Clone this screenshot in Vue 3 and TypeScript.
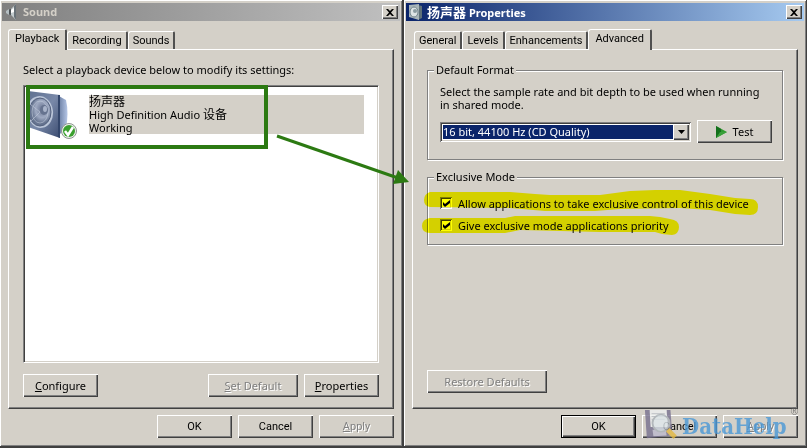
<script setup lang="ts">
import { ref } from 'vue'

const playbackTabs = ['Playback', 'Recording', 'Sounds']
const propertyTabs = ['General', 'Levels', 'Enhancements', 'Advanced']
const activePlayback = ref('Playback')
const activeProperty = ref('Advanced')
const format = ref('16 bit, 44100 Hz (CD Quality)')
const allowExclusive = ref(true)
const givePriority = ref(true)
</script>

<template>
  <main class="desktop">
    <section class="window sound">
      <header class="titlebar inactive">
        <svg class="app-icon" width="16" height="16" viewBox="0 0 16 16" aria-hidden="true">
          <path d="M4 6l3-1v6l-3-1z" fill="#4a5054" />
          <path d="M7 5l5-5v16l-5-5z" fill="#c3cbce" />
          <path d="M10 2l2-2v16l-2-3z" fill="#697278" />
          <path d="M2 7l3-2v6l-3-2z" fill="#b5bec2" />
          <path d="M7 6l3-2v4L7 9z" fill="#fff" />
        </svg>
        <h1>Sound</h1>
        <button class="close" type="button" aria-label="Close">
          <svg width="8" height="7" viewBox="0 0 8 7"><path d="M0 0h2l2 2 2-2h2L5 3.500 8 7H6L4 5 2 7H0l3-3.500z" fill="#000" /></svg>
        </button>
      </header>
      <div class="body">
        <nav class="tabs" role="tablist">
          <button v-for="t in playbackTabs" :key="t" type="button" role="tab" class="tab" :class="{ active: t === activePlayback }" :aria-selected="t === activePlayback" @click="activePlayback = t">{{ t }}</button>
        </nav>
        <div class="panel playback">
          <p class="hint">Select a playback device below to modify its settings:</p>
          <div class="list">
            <div class="device">
              <svg class="speaker" width="52" height="52" viewBox="0 0 52 52" aria-hidden="true">
                <defs>
                  <linearGradient id="side" x1="0" x2="1"><stop offset="0" stop-color="#5d7196" /><stop offset="1" stop-color="#b5c6e6" /></linearGradient>
                  <linearGradient id="front" x1="0" y1="0" x2="1" y2="1"><stop offset="0" stop-color="#5f7190" /><stop offset=".5" stop-color="#7888a8" /><stop offset="1" stop-color="#3b4c70" /></linearGradient>
                  <radialGradient id="cone" cx=".6" cy=".4"><stop offset="0" stop-color="#66728f" /><stop offset=".6" stop-color="#9faac2" /><stop offset="1" stop-color="#65738f" /></radialGradient>
                </defs>
                <path d="M29 5l9 5q3 13 0 28l-9 9z" fill="url(#side)" />
                <path d="M0 1l32 4v43L0 37z" fill="url(#front)" />
                <path d="M30 5l2 0v43l-2-1z" fill="#33466b" />
                <ellipse cx="12" cy="22" rx="13" ry="16" fill="#bac5d8" transform="rotate(-8 12 22)" />
                <ellipse cx="12" cy="22" rx="11" ry="14" fill="url(#cone)" stroke="#53617e" />
                <ellipse cx="12" cy="22" rx="8" ry="11" fill="none" stroke="#c0c9db" opacity=".6" />
                <path d="M12 22L2 14M12 22L3 31" stroke="#c2cbdc" opacity=".6" />
                <ellipse cx="16" cy="20" rx="4" ry="5" fill="#66738f" />
                <ellipse cx="17" cy="19" rx="2" ry="3" fill="#a9b4ca" />
                <circle cx="41" cy="41" r="7.500" fill="#eef2ee" stroke="#8e9690" />
                <circle cx="41" cy="41" r="6" fill="#3aa02e" />
                <path d="M37 41l3 4 5-8" fill="none" stroke="#fff" stroke-width="2.500" />
              </svg>
              <div class="device-text">
                <span class="cjk">扬声器</span>
                <span>High Definition Audio <span class="cjk">设备</span></span>
                <span>Working</span>
              </div>
            </div>
          </div>
          <div class="row actions">
            <button type="button" class="btn"><span><u>C</u>onfigure</span></button>
            <span class="grow"></span>
            <button type="button" class="btn wide" disabled><span><u>S</u>et Default</span></button>
            <button type="button" class="btn"><span><u>P</u>roperties</span></button>
          </div>
        </div>
        <footer class="row footer">
          <button type="button" class="btn">OK</button>
          <button type="button" class="btn">Cancel</button>
          <button type="button" class="btn" disabled><span><u>A</u>pply</span></button>
        </footer>
      </div>
    </section>

    <section class="window properties">
      <header class="titlebar">
        <svg class="app-icon" width="16" height="16" viewBox="0 0 16 16" aria-hidden="true">
          <path d="M10 1l4 1v12l-4 2z" fill="#5e7078" />
          <path d="M1 1l10-1v16L1 13z" fill="#a8b5b9" />
          <ellipse cx="6" cy="8" rx="4" ry="5" fill="#dde4e5" stroke="#71838a" />
          <ellipse cx="7" cy="7" rx="2" ry="2" fill="#8a9ba1" />
        </svg>
        <h1><span class="cjk">扬声器</span> Properties</h1>
        <button class="close" type="button" aria-label="Close">
          <svg width="8" height="7" viewBox="0 0 8 7"><path d="M0 0h2l2 2 2-2h2L5 3.500 8 7H6L4 5 2 7H0l3-3.500z" fill="#000" /></svg>
        </button>
      </header>
      <div class="body">
        <nav class="tabs" role="tablist">
          <button v-for="t in propertyTabs" :key="t" type="button" role="tab" class="tab" :class="{ active: t === activeProperty }" :aria-selected="t === activeProperty" @click="activeProperty = t">{{ t }}</button>
        </nav>
        <div class="panel advanced">
          <fieldset class="group">
            <legend>Default Format</legend>
            <label class="desc" for="format">Select the sample rate and bit depth to be used when running in shared mode.</label>
            <div class="row format-row">
              <div class="combo">
                <select id="format" v-model="format">
                  <option>16 bit, 44100 Hz (CD Quality)</option>
                </select>
                <span class="drop" aria-hidden="true">
                  <svg width="7" height="4" viewBox="0 0 7 4"><path d="M0 0h7L3.500 4z" fill="#000" /></svg>
                </span>
              </div>
              <button type="button" class="btn">
                <svg width="11" height="12" viewBox="0 0 11 12" aria-hidden="true"><path d="M0 0l11 6L0 12z" fill="#2f9a2f" /><path d="M0 0l5 3v4L0 12z" fill="#14701c" /><path d="M0 12l4-6 7 0z" fill="#3aa03a" /></svg>
                Test
              </button>
            </div>
          </fieldset>
          <fieldset class="group exclusive">
            <legend>Exclusive Mode</legend>
            <label class="check">
              <span class="box"><input v-model="allowExclusive" type="checkbox" /><svg v-if="allowExclusive" width="7" height="7" viewBox="0 0 7 7"><path d="M0 2l2 2 5-4v3L2 7 0 5z" fill="#000" /></svg></span>
              Allow applications to take exclusive control of this device
            </label>
            <label class="check">
              <span class="box"><input v-model="givePriority" type="checkbox" /><svg v-if="givePriority" width="7" height="7" viewBox="0 0 7 7"><path d="M0 2l2 2 5-4v3L2 7 0 5z" fill="#000" /></svg></span>
              Give exclusive mode applications priority
            </label>
            <svg class="marker" width="340" height="48" viewBox="0 0 340 48" aria-hidden="true">
              <path d="M8 4L88 4 113 6 128 7H178L208 3 233 2H258L288 6 313 10 328 11Q336 11 336 19T328 27L313 26 288 22 258 20 198 21 173 23H123L88 20 8 19Q2 18 2 12T8 4z" fill="#ff0" />
              <path d="M8 30H83L93 28H228L238 29 248 31Q257 32 257 39T250 47L240 46 233 44H178L98 42 83 45H8Q0 45 0 38T8 30z" fill="#ff0" />
            </svg>
          </fieldset>
          <span class="grow"></span>
          <div class="row">
            <button type="button" class="btn restore" disabled>Restore Defaults</button>
          </div>
        </div>
        <footer class="row footer">
          <button type="button" class="btn default">OK</button>
          <button type="button" class="btn">Cancel</button>
          <button type="button" class="btn" disabled><span><u>A</u>pply</span></button>
        </footer>
      </div>
      <div class="watermark">
        <svg width="34" height="34" viewBox="0 0 36 34" aria-hidden="true">
          <path d="M1 1l27 0 2 27L3 31z" fill="#77708f" />
          <path d="M6 1h18l1 18H7z" fill="#eef0f0" />
          <path d="M8 5h14M8 8h14M8 11h14" stroke="#b6bcc4" />
          <path d="M9 22h14l1 6-14 1z" fill="#bcb9cc" />
          <circle cx="18" cy="15" r="9" fill="#dce8ee" fill-opacity=".75" stroke="#aab2b8" stroke-width="2" />
          <path d="M25 22l8 8" stroke="#e3b940" stroke-width="5" />
        </svg>
        <span class="brand">DataHelp</span>
        <span class="reg">®</span>
      </div>
    </section>

    <svg class="callout" width="412" height="192" viewBox="0 0 412 192" aria-hidden="true">
      <rect x="28" y="87" width="238" height="60" fill="none" stroke="#2c7a12" stroke-width="4" />
      <path d="M277 136L398 178" stroke="#2c7a12" stroke-width="3" />
      <path d="M409 182l-16 2 5-14z" fill="#2c7a12" />
    </svg>
  </main>
</template>

<style>
body {
  background: #d4d0c8;
}
</style>

<style scoped>
* {
  box-sizing: border-box;
}
.desktop {
  --ui: "Noto Sans", "Noto Sans CJK SC", sans-serif;
  --tab: Roboto, "Noto Sans", sans-serif;
  position: relative;
  display: grid;
  grid-template-columns: 404fr 403fr;
  min-height: 100vh;
  overflow: hidden;
  font: 11px/13px var(--ui);
  color: #000;
}
.window {
  position: relative;
  display: flex;
  flex-direction: column;
  background: #d4d0c8;
  border-right: 1px solid #404040;
  border-bottom: 2px solid #404040;
  padding: 2px 1px 0;
  box-shadow: inset 1px 1px #fff, inset -1px -1px #808080;
}
.sound {
  border-right-width: 2px;
}
.titlebar {
  display: flex;
  align-items: center;
  gap: 3px;
  height: 18px;
  margin: 1px 1px 0;
  padding: 0 2px;
  background: linear-gradient(90deg, #0a246a, #a6caf0);
  color: #fff;
}
.titlebar.inactive {
  background: linear-gradient(90deg, #808080, #c0c0c0);
  color: #d4d0c8;
}
.titlebar h1 {
  flex: 1;
  margin: 0;
  font: bold 11px/18px var(--ui);
}
.cjk {
  font-size: 12px;
}
.titlebar .cjk {
  font-size: 13px;
}
.close {
  display: grid;
  place-items: center;
  width: 16px;
  height: 14px;
  padding: 0;
  border: 0;
  background: #d4d0c8;
  box-shadow: inset 1px 1px #fff, inset -1px -1px #404040, inset -2px -2px #808080;
}
.body {
  flex: 1;
  display: flex;
  flex-direction: column;
  padding: 8px 7px 8px;
}
.tabs {
  display: flex;
  align-items: flex-end;
  height: 20px;
}
.properties .tabs {
  padding-left: 2px;
}
.tab {
  position: relative;
  height: 18px;
  padding: 0 4px;
  border: 1px solid #fff;
  border-right: 2px solid #505050;
  border-bottom: 0;
  border-radius: 3px 2px 0 0;
  background: #d4d0c8;
  color: #000;
  font: 11px/17px var(--tab);
}
.tab.active {
  z-index: 1;
  height: 21px;
  margin-bottom: -1px;
  padding: 0 6px 3px;
}
.panel {
  flex: 1;
  display: flex;
  flex-direction: column;
  border: 1px solid #fff;
  border-right-color: #404040;
  border-bottom-color: #404040;
  box-shadow: inset -1px -1px #808080;
  padding: 12px 14px;
}
.hint {
  margin: 0 0 7px;
  line-height: 16px;
}
.list {
  flex: 1;
  padding: 8px 14px 0 4px;
  background: #fff;
  border: 1px solid #808080;
  border-right-color: #fff;
  border-bottom-color: #fff;
  box-shadow: inset 1px 1px #404040, inset -1px -1px #d4d0c8;
}
.device {
  display: flex;
  align-items: flex-start;
  gap: 9px;
}
.speaker {
  flex: none;
  margin-top: -4px;
}
.device-text {
  flex: 1;
  display: grid;
  grid-auto-rows: 13px;
  margin-top: 1px;
  background: #d4d0c8;
}
.row {
  display: flex;
  gap: 6px;
}
.grow {
  flex: 1;
}
.actions {
  margin-top: 11px;
}
.playback {
  padding-bottom: 11px;
}
.advanced {
  padding-bottom: 15px;
}
.footer {
  justify-content: flex-end;
  margin-top: 6px;
}
.btn {
  display: flex;
  align-items: center;
  justify-content: center;
  gap: 6px;
  width: 75px;
  height: 23px;
  padding: 0;
  border: 0;
  background: #d4d0c8;
  box-shadow: inset 1px 1px #fff, inset -1px -1px #404040, inset -2px -2px #808080;
  color: #000;
  font: 11px/16px var(--ui);
}
.btn.wide {
  width: 90px;
}
.btn.restore {
  width: 120px;
}
.footer .btn {
  font-family: var(--tab);
}
.btn:disabled {
  color: #808080;
  text-shadow: 1px 1px #fff;
}
.btn.default {
  border: 1px solid #000;
}
.group {
  position: relative;
  min-width: 0;
  margin: 0;
  padding: 1px 10px 16px 12px;
  border: 1px solid #808080;
  box-shadow: 1px 1px #fff, inset 1px 1px #fff;
}
.group legend {
  margin-left: -6px;
  padding: 0 2px;
  background: #d4d0c8;
  line-height: 16px;
}
.desc {
  display: block;
  margin-top: 6px;
  padding-right: 10px;
}
.format-row {
  margin-top: 9px;
}
.combo {
  position: relative;
  flex: 1;
  height: 20px;
  margin-top: 2px;
  padding: 2px;
  background: #fff;
  box-shadow: inset 1px 1px #808080, inset -1px -1px #fff, inset 2px 2px #404040, inset -2px -2px #d4d0c8;
}
.combo select {
  display: block;
  width: 100%;
  height: 16px;
  padding: 0 18px 0 0;
  border: 1px solid #fff;
  border-radius: 0;
  background: #0a246a;
  color: #fff;
  appearance: none;
  font: 11px/14px var(--ui);
}
.drop {
  position: absolute;
  top: 2px;
  right: 2px;
  display: grid;
  place-items: center;
  width: 16px;
  height: 16px;
  background: #d4d0c8;
  box-shadow: inset 1px 1px #fff, inset -1px -1px #404040, inset -2px -2px #808080;
  pointer-events: none;
}
.exclusive {
  margin-top: 9px;
  padding-top: 7px;
  padding-bottom: 8px;
}
.check {
  display: flex;
  align-items: center;
  gap: 6px;
  height: 22px;
}
.box {
  display: grid;
  place-items: center;
  width: 12px;
  height: 12px;
}
.box > * {
  grid-area: 1 / 1;
}
.box svg {
  z-index: 1;
  pointer-events: none;
}
.box input {
  width: 12px;
  height: 12px;
  margin: 0;
  appearance: none;
  background: #fff;
  box-shadow: inset 1px 1px #808080, inset -1px -1px #fff, inset 2px 2px #404040, inset -2px -2px #d4d0c8;
}
.marker {
  position: absolute;
  top: 3px;
  left: -6px;
  z-index: 2;
  mix-blend-mode: multiply;
  pointer-events: none;
}
.callout {
  position: absolute;
  top: 0;
  left: 0;
  z-index: 3;
  pointer-events: none;
}
.watermark {
  position: absolute;
  right: 8px;
  bottom: 4px;
  display: flex;
  align-items: flex-start;
  gap: 4px;
  pointer-events: none;
  opacity: .8;
}
.brand {
  margin-top: 4px;
  color: #4a98d6;
  font: bold 22px/28px "DejaVu Serif Condensed", "DejaVu Serif", serif;
}
.reg {
  color: #666;
  font: 10px/8px "Liberation Sans", sans-serif;
}
</style>
